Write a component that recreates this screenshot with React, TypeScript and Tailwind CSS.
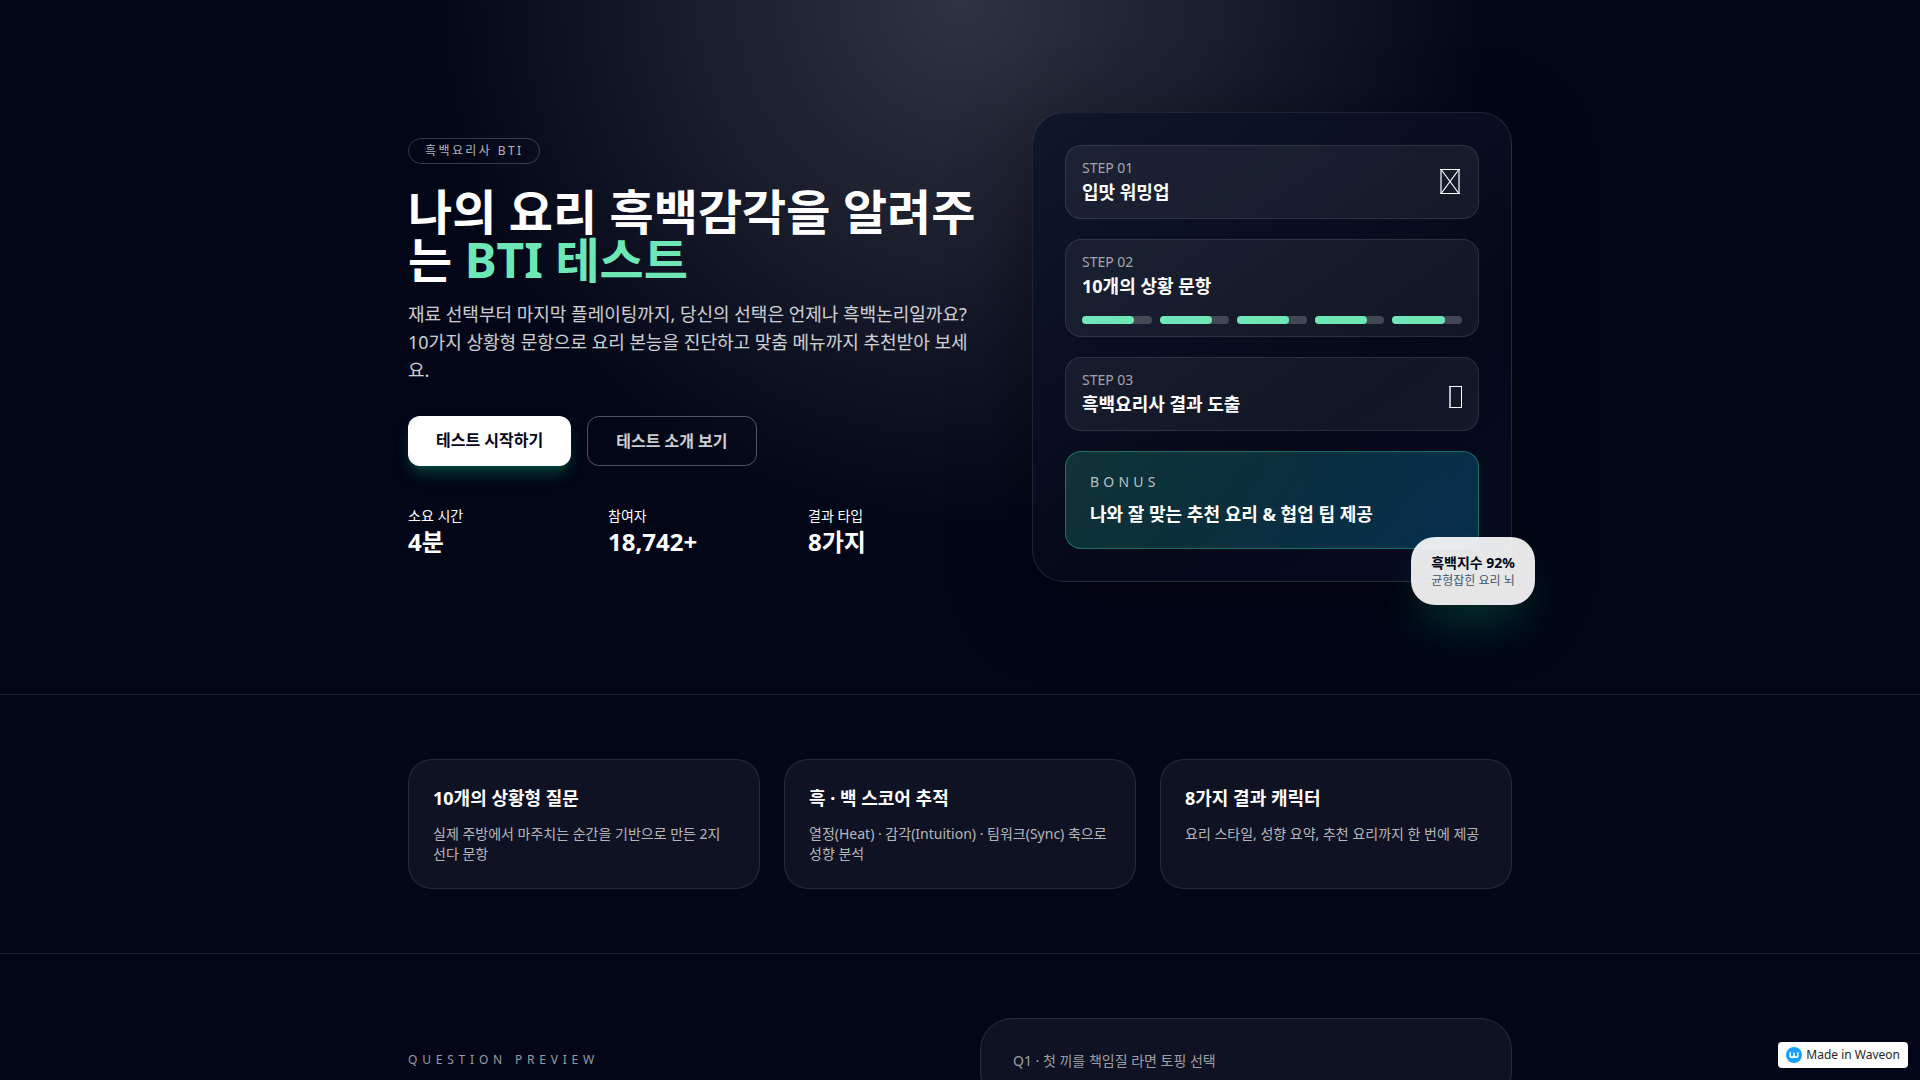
import React from 'react';

interface Stat {
  label: string;
  value: string;
}

interface Feature {
  title: string;
  description: string;
}

const stats: Stat[] = [
  { label: '소요 시간', value: '4분' },
  { label: '참여자', value: '18,742+' },
  { label: '결과 타입', value: '8가지' },
];

const features: Feature[] = [
  { title: '10개의 상황형 질문', description: '실제 주방에서 마주치는 순간을 기반으로 만든 2지\n선다 문항' },
  { title: '흑 · 백 스코어 추적', description: '열정(Heat) · 감각(Intuition) · 팀워크(Sync) 축으로 성향 분석' },
  { title: '8가지 결과 캐릭터', description: '요리 스타일, 성향 요약, 추천 요리까지 한 번에 제공' },
];

const progress = [75, 75, 75, 75, 75];

function CrossedBox() {
  return (
    <svg width="22" height="27" viewBox="0 0 22 27" fill="none" stroke="currentColor" aria-hidden="true">
      <path d="M0 .5h20M0 24.5h20" />
      <path d="M1 0v25M19 0v25" strokeWidth="2" strokeOpacity="0.6" />
      <path d="M1.5 1l17 23M18.5 1l-17 23" strokeWidth="1.2" />
    </svg>
  );
}

function EmptyBox() {
  return (
    <svg width="13" height="28" viewBox="0 0 13 28" fill="none" stroke="currentColor" aria-hidden="true">
      <path d="M0 6.5h13M0 27.5h13M12.5 6v22" />
      <path d="M1 6v22" strokeWidth="2" strokeOpacity="0.7" />
    </svg>
  );
}

function StepCard({ step, title, icon, children }: {
  step: string;
  title: string;
  icon?: React.ReactNode;
  children?: React.ReactNode;
}) {
  return (
    <div className="rounded-2xl border border-white/10 bg-white/6 px-4 py-3">
      <div className="flex items-center justify-between">
        <div>
          <p className="text-sm text-white/60">{step}</p>
          <p className="text-lg font-bold">{title}</p>
        </div>
        {icon}
      </div>
      {children}
    </div>
  );
}

function Hero() {
  return (
    <header className="relative border-b border-white/10">
      <div className="absolute inset-0 bg-[radial-gradient(circle_at_top,rgba(255,255,255,0.18),transparent_45%)]" />
      <div className="relative mx-auto grid max-w-6xl items-center gap-12 px-6 py-28 lg:grid-cols-[1.2fr_1fr]">
        <div>
          <p className="inline-flex rounded-full border border-white/20 px-4 py-1 text-xs tracking-[0.2em] text-white/70">
            흑백요리사 BTI
          </p>
          <h1 className="mt-6 text-5xl leading-none font-bold">
            나의 요리 흑백감각을 알려주는 <span className="text-[#6ee7b7]">BTI 테스트</span>
          </h1>
          <p className="mt-4 text-lg leading-7 text-white/80">
            재료 선택부터 마지막 플레이팅까지, 당신의 선택은 언제나 흑백논리일까요? 10가지 상황형 문항으로 요리
            본능을 진단하고 맞춤 메뉴까지 추천받아 보세요.
          </p>
          <div className="mt-8 flex flex-wrap gap-4">
            <a href="#test" className="rounded-xl bg-white px-7 py-3 font-bold text-slate-950 shadow-lg shadow-[#10b981]/30">
              테스트 시작하기
            </a>
            <a href="#intro" className="rounded-xl border border-white/30 px-7 py-3 font-bold text-white/80">
              테스트 소개 보기
            </a>
          </div>
          <dl className="mt-10 grid grid-cols-3 gap-6">
            {stats.map(stat => (
              <div key={stat.label}>
                <dt className="text-sm">{stat.label}</dt>
                <dd className="text-2xl font-bold">{stat.value}</dd>
              </div>
            ))}
          </dl>
        </div>

        {/* Steps panel */}
        <div className="relative rounded-[32px] border border-white/10 bg-[linear-gradient(145deg,#0f172a,#040819_65%,#070b20)] p-8 shadow-[0_20px_80px_rgba(0,0,0,0.45)]">
          <div className="space-y-5">
            <StepCard step="STEP 01" title="입맛 워밍업" icon={<CrossedBox />} />
            <StepCard step="STEP 02" title="10개의 상황 문항">
              <div className="mt-4 flex gap-2">
                {progress.map((value, i) => (
                  <div key={i} className="h-2 flex-1 rounded-full bg-white/20">
                    <div className="h-full rounded-full bg-[#6ee7b7]" style={{ width: `${value}%` }} />
                  </div>
                ))}
              </div>
            </StepCard>
            <StepCard step="STEP 03" title="흑백요리사 결과 도출" icon={<EmptyBox />} />
            <div className="rounded-2xl border border-[#34d399]/40 bg-[linear-gradient(120deg,rgba(52,211,153,0.2),rgba(14,165,233,0.24))] px-6 py-5">
              <p className="text-sm tracking-[0.3em] text-white/70">BONUS</p>
              <p className="mt-2 text-lg font-bold">나와 잘 맞는 추천 요리 &amp; 협업 팁 제공</p>
            </div>
          </div>
          <div className="absolute -right-6 -bottom-6 rounded-3xl bg-white/90 px-5 py-4 shadow-2xl shadow-[#10b981]/30">
            <p className="text-sm font-bold text-slate-950">흑백지수 92%</p>
            <p className="text-xs text-slate-600">균형잡힌 요리 뇌</p>
          </div>
        </div>
      </div>
    </header>
  );
}

export default function App() {
  return (
    <div className="min-h-screen bg-[#020617] font-['Noto_Sans','Noto_Sans_CJK_KR',sans-serif] text-white">
      <Hero />

      {/* Features */}
      <section id="intro" className="border-b border-white/10">
        <div className="mx-auto grid max-w-6xl gap-6 px-6 py-16 md:grid-cols-3">
          {features.map(feature => (
            <article key={feature.title} className="rounded-3xl border border-white/10 bg-white/5 p-6">
              <h3 className="text-lg font-bold">{feature.title}</h3>
              <p className="mt-3 text-sm whitespace-pre-line text-white/70">{feature.description}</p>
            </article>
          ))}
        </div>
      </section>

      {/* Question preview */}
      <section id="test">
        <div className="mx-auto grid max-w-6xl gap-10 px-6 py-16 md:grid-cols-2">
          <h2 className="pt-[34px] text-xs tracking-[0.4em] text-white/60">QUESTION PREVIEW</h2>
          <div className="rounded-[32px] border border-white/10 bg-white/5 p-8">
            <p className="text-sm text-white/60">Q1 · 첫 끼를 책임질 라면 토핑 선택</p>
          </div>
        </div>
      </section>

      <a href="#waveon" className="fixed right-3 bottom-3 flex items-center gap-1 rounded bg-white px-2 py-1 text-xs leading-[18px] text-neutral-800">
        <svg width="16" height="16" viewBox="0 0 16 16" aria-hidden="true">
          <circle cx="8" cy="8" r="8" fill="#18a0fb" />
          <path d="M4.2 5.8v2.6a1.9 1.9 0 0 0 3.8 0V5.8v2.6a1.9 1.9 0 0 0 3.8 0V5.8" fill="none" stroke="#fff" strokeWidth="1.6" strokeLinecap="round" />
        </svg>
        Made in Waveon
      </a>
    </div>
  );
}
